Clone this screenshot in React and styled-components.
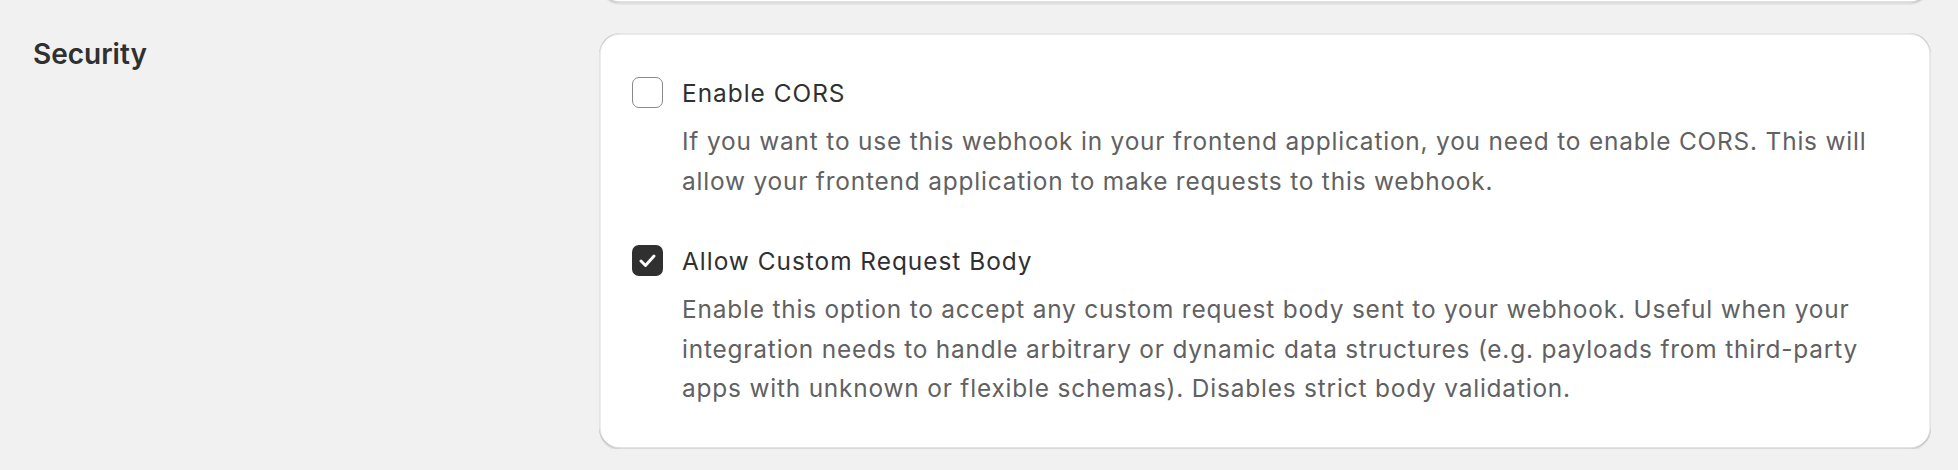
import React from "react";
import styled, { createGlobalStyle } from "styled-components";

const GlobalStyle = createGlobalStyle`
  html, body {
    margin: 0;
    padding: 0;
    background: #f1f1f1;
    overflow: hidden;
  }
  body {
    font-family: Inter, "Noto Sans", sans-serif;
    color: #303030;
    -webkit-font-smoothing: antialiased;
  }
`;

const Page = styled.div`
  display: flex;
  flex-direction: column;
  gap: 30px;
  padding: 0 27px 0 33px;
  margin-top: -100px;
`;

const Section = styled.section`
  display: grid;
  grid-template-columns: 566px 1fr;
  align-items: start;
`;

const Heading = styled.h2`
  margin: 3px 0 0;
  font-size: 28px;
  line-height: 36px;
  font-weight: 600;
  color: #303030;
`;

const Card = styled.div`
  background: #ffffff;
  border-radius: 21px;
  min-height: ${(p) => p.$minHeight || 0}px;
  padding: ${(p) => (p.$empty ? "0" : "44px 33px 40px")};
  box-shadow:
    0 1.75px 0 0 rgba(26, 26, 26, 0.07),
    inset 1.75px 0 0 0 rgba(0, 0, 0, 0.1),
    inset -1.75px 0 0 0 rgba(0, 0, 0, 0.1),
    inset 0 -1.75px 0 0 rgba(0, 0, 0, 0.15),
    inset 0 1.75px 0 0 rgba(204, 204, 204, 0.5);
  display: flex;
  flex-direction: column;
  gap: 44px;
`;

const Option = styled.label`
  display: grid;
  grid-template-columns: 31px 1fr;
  column-gap: 19px;
  cursor: pointer;
`;

const Box = styled.span`
  width: 31px;
  height: 31px;
  box-sizing: border-box;
  border-radius: 7px;
  display: flex;
  align-items: center;
  justify-content: center;
  background: ${(p) => (p.$checked ? "#303030" : "#ffffff")};
  border: ${(p) => (p.$checked ? "none" : "1.5px solid #8a8a8a")};
`;

const Label = styled.span`
  font-size: 24.4px;
  letter-spacing: 1px;
  line-height: 33px;
  color: #303030;
  font-weight: 400;
`;

const Description = styled.p`
  grid-column: 2;
  margin: 12px 0 0;
  font-size: 24.4px;
  letter-spacing: 0.82px;
  line-height: 39.5px;
  color: #616161;
`;

function Checkbox({ checked }) {
  return (
    <Box $checked={checked}>
      {checked && (
        <svg width="31" height="31" viewBox="0 0 31 31" fill="none">
          <polyline
            points="9,16 13.5,20.5 22,11"
            stroke="#ffffff"
            strokeWidth="2.9"
            strokeLinecap="round"
            strokeLinejoin="round"
          />
        </svg>
      )}
    </Box>
  );
}

const options = [
  {
    label: "Enable CORS",
    checked: false,
    description:
      "If you want to use this webhook in your frontend application, you need to enable CORS. This will allow your frontend application to make requests to this webhook.",
  },
  {
    label: "Allow Custom Request Body",
    checked: true,
    description:
      "Enable this option to accept any custom request body sent to your webhook. Useful when your integration needs to handle arbitrary or dynamic data structures (e.g. payloads from third-party apps with unknown or flexible schemas). Disables strict body validation.",
  },
];

export default function App() {
  return (
    <>
      <GlobalStyle />
      <Page>
        <Section>
          <div />
          <Card $empty $minHeight={103} />
        </Section>
        <Section>
          <Heading>Security</Heading>
          <Card>
            {options.map((o) => (
              <Option key={o.label}>
                <Checkbox checked={o.checked} />
                <Label>{o.label}</Label>
                <Description>{o.description}</Description>
              </Option>
            ))}
          </Card>
        </Section>
      </Page>
    </>
  );
}
